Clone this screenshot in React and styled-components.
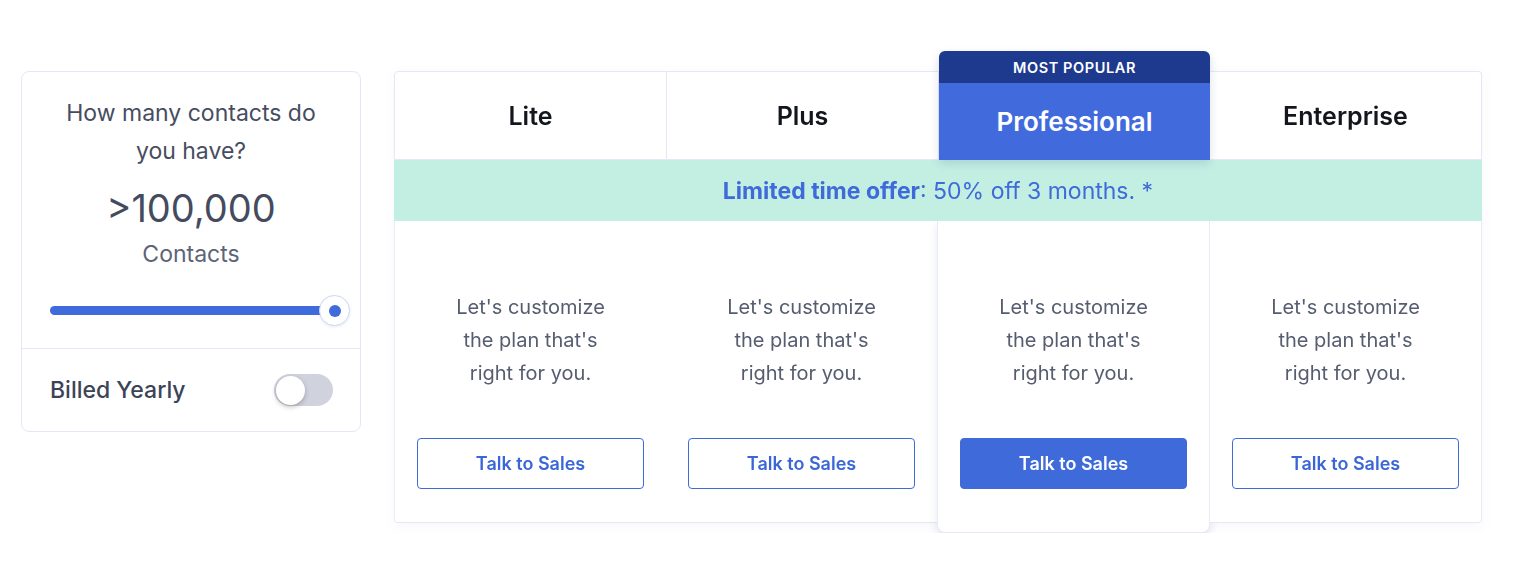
import styled, { createGlobalStyle } from "styled-components";

const plans = [
    { name: "Lite" },
    { name: "Plus" },
    { name: "Professional", popular: true },
    { name: "Enterprise" },
];

export default function App() {
    return (
        <>
            <GlobalStyle />
            <Page>
                <ContactsCard>
                    <CardTop>
                        <Question>How many contacts do you have?</Question>
                        <Count>&gt;100,000</Count>
                        <CountLabel>Contacts</CountLabel>
                        <Slider>
                            <Track />
                            <Thumb />
                        </Slider>
                    </CardTop>
                    <BillingRow>
                        <span>Billed Yearly</span>
                        <Toggle>
                            <Knob />
                        </Toggle>
                    </BillingRow>
                </ContactsCard>

                <Table>
                    <HeaderRow>
                        {plans.map((plan, i) =>
                            plan.popular ? (
                                <PopularHeader key={plan.name}>
                                    <PopularTag>MOST POPULAR</PopularTag>
                                    <PopularTitle>{plan.name}</PopularTitle>
                                </PopularHeader>
                            ) : (
                                <HeaderCell key={plan.name} $first={i === 0} $last={i === plans.length - 1}>
                                    {plan.name}
                                </HeaderCell>
                            )
                        )}
                    </HeaderRow>
                    <Offer>
                        <b>Limited time offer</b>: 50% off 3 months. *
                    </Offer>
                    <BodyRow>
                        {plans.map((plan, i) => (
                            <BodyCell
                                key={plan.name}
                                $popular={plan.popular}
                                $first={i === 0}
                                $last={i === plans.length - 1}
                            >
                                <Description>
                                    Let's customize
                                    <br />
                                    the plan that's
                                    <br />
                                    right for you.
                                </Description>
                                <SalesButton $filled={plan.popular}>Talk to Sales</SalesButton>
                            </BodyCell>
                        ))}
                    </BodyRow>
                </Table>
            </Page>
        </>
    );
}

const GlobalStyle = createGlobalStyle`
    * {
        box-sizing: border-box;
    }
    body {
        margin: 0;
        background: #fff;
        font-family: Inter, "Noto Sans", sans-serif;
    }
`;

const Page = styled.div`
    display: flex;
    align-items: flex-start;
    gap: 33px;
    padding: 51px 0 0 21px;
`;

const ContactsCard = styled.div`
    width: 340px;
    margin-top: 20px;
    border: 1px solid #e4e8f6;
    border-radius: 8px;
    background: #fff;
`;

const CardTop = styled.div`
    padding: 22px 10px 22px 28px;
    display: flex;
    flex-direction: column;
    align-items: center;
    border-bottom: 1px solid #e4e8f6;
`;

const Question = styled.div`
    width: 280px;
    margin-right: 18px;
    font-size: 23px;
    line-height: 38px;
    color: #474d60;
    text-align: center;
`;

const Count = styled.div`
    margin: 15px 18px 0 0;
    font-size: 38px;
    line-height: 46px;
    color: #454b5e;
`;

const CountLabel = styled.div`
    margin: 8px 18px 0 0;
    font-size: 23px;
    line-height: 30px;
    color: #5d6478;
`;

const Slider = styled.div`
    position: relative;
    width: 100%;
    height: 31px;
    margin-top: 26px;
    display: flex;
    align-items: center;
`;

const Track = styled.div`
    width: calc(100% - 15px);
    height: 9px;
    border-radius: 5px;
    background: #406bdc;
`;

const Thumb = styled.div`
    position: absolute;
    right: 0;
    top: 0;
    width: 31px;
    height: 31px;
    border-radius: 50%;
    background: #fff;
    border: 1.5px solid #cdd8f6;
    box-shadow: 0 1px 3px rgba(60, 80, 140, 0.12);
    &::after {
        content: "";
        position: absolute;
        left: 50%;
        top: 50%;
        width: 12px;
        height: 12px;
        margin: -6px 0 0 -6px;
        border-radius: 50%;
        background: #406bdc;
    }
`;

const BillingRow = styled.div`
    height: 82px;
    padding: 0 27px 0 28px;
    display: flex;
    align-items: center;
    justify-content: space-between;
    font-size: 23px;
    font-weight: 500;
    color: #3d4357;
`;

const Toggle = styled.div`
    width: 59px;
    height: 32px;
    border-radius: 16px;
    background: #d0d3de;
    display: flex;
    align-items: center;
    padding: 0 2px;
`;

const Knob = styled.div`
    width: 29px;
    height: 29px;
    border-radius: 50%;
    background: #fff;
    box-shadow: 0 2px 5px rgba(0, 0, 0, 0.25);
`;

const Table = styled.div`
    width: 1088px;
    display: flex;
    flex-direction: column;
    filter: drop-shadow(0 3px 6px rgba(40, 60, 120, 0.04));
`;

const HeaderRow = styled.div`
    display: flex;
    align-items: flex-end;
`;

const HeaderCell = styled.div`
    flex: 1;
    height: 89px;
    display: flex;
    align-items: center;
    justify-content: center;
    background: #fff;
    border-top: 1px solid #e4e8f6;
    border-bottom: 1px solid #e4e8f6;
    border-left: ${(p) => (p.$first ? "1px solid #e4e8f6" : "none")};
    border-right: 1px solid #e4e8f6;
    border-radius: ${(p) => (p.$first ? "4px 0 0 0" : p.$last ? "0 4px 0 0" : "0")};
    font-size: 25px;
    font-weight: 600;
    color: #14161d;
`;

const PopularHeader = styled.div`
    flex: 1;
    position: relative;
    z-index: 2;
    border-radius: 6px 6px 0 0;
    overflow: hidden;
    box-shadow: 0 4px 10px rgba(30, 50, 110, 0.14);
`;

const PopularTag = styled.div`
    height: 32px;
    display: flex;
    align-items: center;
    justify-content: center;
    background: #1d3a8f;
    color: #fff;
    font-size: 14.5px;
    font-weight: 600;
    letter-spacing: 0.6px;
`;

const PopularTitle = styled.div`
    height: 77px;
    display: flex;
    align-items: center;
    justify-content: center;
    background: #416bdc;
    color: #fff;
    font-size: 26px;
    font-weight: 600;
`;

const Offer = styled.div`
    position: relative;
    z-index: 1;
    height: 61px;
    display: flex;
    align-items: center;
    justify-content: center;
    background: #c3efe3;
    color: #3f6ad9;
    font-size: 23px;
    b {
        font-weight: 700;
    }
`;

const BodyRow = styled.div`
    display: flex;
    align-items: flex-start;
`;

const BodyCell = styled.div`
    flex: 1;
    padding: 70px 22px ${(p) => (p.$popular ? "43px" : "33px")};
    display: flex;
    flex-direction: column;
    align-items: stretch;
    background: #fff;
    border-bottom: 1px solid #e4e8f6;
    border-left: ${(p) => (p.$first || p.$popular ? "1px solid #e8ebf6" : "none")};
    border-right: ${(p) => (p.$last || p.$popular ? "1px solid #e8ebf6" : "none")};
    border-radius: ${(p) => (p.$popular ? "0 0 8px 8px" : p.$first ? "0 0 0 4px" : p.$last ? "0 0 4px 0" : "0")};
    box-shadow: ${(p) => (p.$popular ? "0 4px 10px rgba(30, 50, 110, 0.1)" : "none")};
    position: relative;
`;

const Description = styled.p`
    margin: 0 0 48px;
    font-size: 20px;
    line-height: 33px;
    color: #575d70;
    text-align: center;
`;

const SalesButton = styled.button`
    height: 51px;
    border-radius: 4px;
    border: 1.5px solid #3f6ad9;
    background: ${(p) => (p.$filled ? "#3f6ad9" : "#fff")};
    color: ${(p) => (p.$filled ? "#fff" : "#3a66d8")};
    font-family: inherit;
    font-size: 18px;
    font-weight: 600;
    cursor: pointer;
`;
